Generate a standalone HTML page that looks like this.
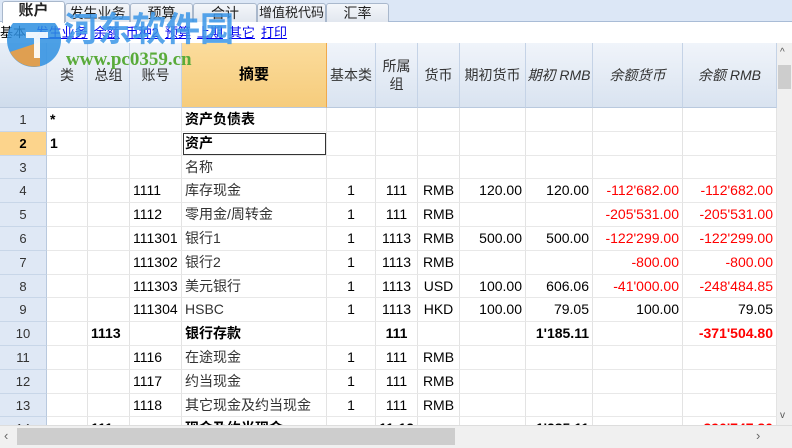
<!DOCTYPE html>
<html><head><meta charset="utf-8"><style>
*{margin:0;padding:0;box-sizing:border-box}
body{width:792px;height:448px;overflow:hidden;background:#fff;font-family:"Liberation Sans","Noto Sans CJK SC",sans-serif;font-size:14px;color:#000;position:relative}
.tabs{position:absolute;left:0;top:0;width:792px;height:22px;background:#dce7f6;border-bottom:1px solid #a9bcd6}
.tab{position:absolute;top:3px;height:19px;border:1px solid #a9b8cc;border-bottom:none;border-radius:3px 3px 0 0;background:linear-gradient(#f4f6fa,#e2e7ef);font-size:14px;text-align:center;line-height:18px;color:#222;white-space:nowrap;overflow:hidden}
.tab.act{top:1px;height:22px;background:#fff;z-index:2;font-size:15px;font-weight:bold}
.links{position:absolute;top:22px;left:0;width:792px;height:21px;font-size:13px;line-height:21px;white-space:nowrap}
.links a{color:#0000ee;text-decoration:underline;margin-left:6px}
.grid{position:absolute;top:43px;left:0}
.c{position:absolute;overflow:hidden;white-space:nowrap;border-right:1px solid #e3e3e3;border-bottom:1px solid #e8e8e8;line-height:23px;padding:0 3px}
.h{background:linear-gradient(#f0f4fa,#d9e3f0);border-right:1px solid #c5d3e6;border-bottom:1px solid #b9c9de;color:#333;text-align:center;display:flex;align-items:center;justify-content:center;line-height:18px;font-size:14px}
.rn{background:#dfe8f5;border-right:1px solid #b9c9de;border-bottom:1px solid #c8d6e8;text-align:center;color:#333;font-size:13px}
.r{text-align:right}.cen{text-align:center}.b{font-weight:bold}.red{color:#f00}
.vs{position:absolute;left:777px;top:43px;width:15px;height:382px;background:#f0f0f0}
.hs{position:absolute;left:0;top:425px;width:792px;height:23px;background:#f0f0f0;border-top:1px solid #ddd}
</style></head><body>
<div class="tabs">
<div class="tab act" style="left:2px;width:63px">账户</div>
<div class="tab" style="left:65px;width:65px">发生业务</div>
<div class="tab" style="left:130px;width:63px">预算</div>
<div class="tab" style="left:193px;width:64px">合计</div>
<div class="tab" style="left:257px;width:69px;font-size:13px">增值税代码</div>
<div class="tab" style="left:326px;width:63px">汇率</div>
</div>
<div class="links">基本 <a>发生业务</a><a>余额</a><a>币种2</a><a>预算</a><a>上期</a><a>其它</a><a>打印</a></div>
<div class="grid" id="g"></div>
<div class="vs"><div style="position:absolute;top:4px;left:3px;font-size:10px;color:#555">^</div><div style="position:absolute;top:22px;left:1px;width:13px;height:24px;background:#cdcdcd"></div><div style="position:absolute;bottom:4px;left:3px;font-size:10px;color:#555">v</div></div>
<div class="hs"><div style="position:absolute;left:4px;top:2px;color:#666;font-size:13px">‹</div><div style="position:absolute;left:17px;top:2px;width:438px;height:17px;background:#cdcdcd"></div><div style="position:absolute;left:756px;top:2px;color:#666;font-size:13px">›</div></div>
<svg style="position:absolute;left:0;top:0" width="240" height="80">
<circle cx="34" cy="40" r="27" fill="#2e8fe0" opacity=".85"/>
<path d="M10 52 A27 27 0 0 0 40 66 L40 42 Z" fill="#f0a040" opacity=".9"/>
<path d="M26 32 h22 v6 h-8 v20 h-6 v-20 h-8z" fill="#fff" opacity=".9"/>
<text x="64" y="41" font-family="Noto Sans CJK SC,sans-serif" font-weight="bold" font-size="34" fill="#3a96e8" opacity=".85">河东软件园</text>
<text x="66" y="65" font-family="Liberation Serif,serif" font-weight="bold" font-size="19" fill="#59ab3a">www.pc0359.cn</text>
</svg>
<script>
var X=[0,47,88,130,182,327,376,418,460,526,593,683,777];
var g=document.getElementById('g'),h='';
var heads=['','类','总组','账号','摘要','基本类','所属<br>组','货币','期初货币','<i>期初 RMB</i>','<i>余额货币</i>','<i>余额 RMB</i>'];
for(var i=0;i<12;i++){var st=i==4?'background:linear-gradient(#fbdc9c,#f6cc7c);border-right:1px solid #f0a94c;color:#000;font-weight:bold;font-size:15px':'';if(i==0)st='background:linear-gradient(#e8eef7,#cfdcec)';
h+='<div class="c h" style="left:'+X[i]+'px;top:0;width:'+(X[i+1]-X[i])+'px;height:65px;'+st+'">'+heads[i]+'</div>';}
var rows=[
['*','','','资产负债表','','','','','','','',1],
['1','','','资产','','','','','','','',1],
['','','','名称','','','','','','',''],
['','','1111','库存现金','1','111','RMB','120.00','120.00','-112\'682.00','-112\'682.00'],
['','','1112','零用金/周转金','1','111','RMB','','','-205\'531.00','-205\'531.00'],
['','','111301','银行1','1','1113','RMB','500.00','500.00','-122\'299.00','-122\'299.00'],
['','','111302','银行2','1','1113','RMB','','','-800.00','-800.00'],
['','','111303','美元银行','1','1113','USD','100.00','606.06','-41\'000.00','-248\'484.85'],
['','','111304','HSBC','1','1113','HKD','100.00','79.05','100.00','79.05'],
['','1113','','银行存款','','111','','','1\'185.11','','-371\'504.80',2],
['','','1116','在途现金','1','111','RMB','','','',''],
['','','1117','约当现金','1','111','RMB','','','',''],
['','','1118','其它现金及约当现金','1','111','RMB','','','',''],
['','111','','现金及约当现金','','11-12','','','1\'285.11','','-390\'747.80',2]];
var RH=23.8;
for(var r=0;r<rows.length;r++){var t=65+r*RH,R=rows[r];
h+='<div class="c rn" style="left:0;top:'+t+'px;width:47px;height:'+RH+'px;'+(r==1?'background:#fcd48c;font-weight:bold;color:#000':'')+'">'+(r+1)+'</div>';
for(var c=1;c<12;c++){var v=R[c-1],cls='c';
if(c>=5&&c!=7)cls+=(c==5||c==6)?' cen':' r';if(c==7)cls+=' cen';
if(v&&v[0]=='-')cls+=' red';
var bold=(R[11]==1&&(c==1||c==4))||(R[11]==2&&(c==2||c==4||c==6||c==9||c==11));
if(bold)cls+=' b';
var col=(c==4&&!bold)?'color:#333;':'';
var ex=(r==1&&c==4)?'outline:1.5px solid #333;outline-offset:-2px;':'';
h+='<div class="'+cls+'" style="'+col+ex+'left:'+X[c]+'px;top:'+t+'px;width:'+(X[c+1]-X[c])+'px;height:'+RH+'px">'+v+'</div>';}}
g.innerHTML=h;
</script>
</body></html>
